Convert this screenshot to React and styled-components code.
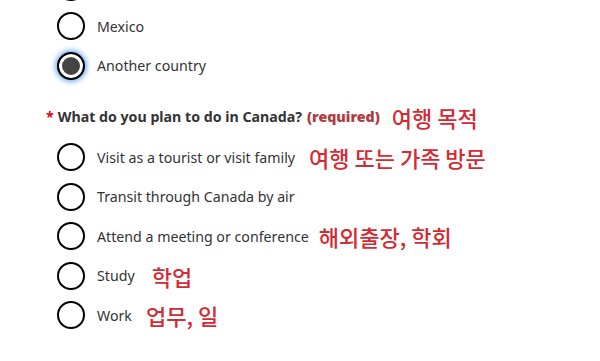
import React, { useState } from "react";
import styled, { createGlobalStyle } from "styled-components";

const GlobalStyle = createGlobalStyle`
  html, body {
    margin: 0;
    padding: 0;
    background: #fff;
    overflow: hidden;
  }
  body {
    font-family: "Noto Sans", "Open Sans", sans-serif;
    color: #333;
  }
`;

const Page = styled.div`
  width: 600px;
  height: 361px;
  overflow: hidden;
  padding-left: 46px;
  box-sizing: border-box;
`;

const Fieldset = styled.fieldset`
  border: 0;
  margin: ${(p) => p.$top || 0}px 0 0;
  padding: 0;
  min-width: 0;
`;

const Legend = styled.legend`
  display: flex;
  align-items: center;
  padding: 0;
  height: 24px;
  margin-bottom: 9px;
  font-size: 14.2px;
  font-weight: 700;
  color: #333;
  white-space: nowrap;
`;

const Star = styled.span`
  color: #d3080c;
  margin-right: 4px;
`;

const Required = styled.strong`
  color: #af3c43;
  margin-left: 5px;
`;

const List = styled.div`
  display: flex;
  flex-direction: column;
  padding-left: 11px;
`;

const Row = styled.label`
  display: flex;
  align-items: center;
  height: 39.5px;
  cursor: pointer;
`;

const Circle = styled.span`
  flex: none;
  width: 28px;
  height: 28px;
  box-sizing: border-box;
  border-radius: 50%;
  border: 2px solid #000;
  background: ${(p) => (p.$checked ? "#444" : "#fff")};
  box-shadow: ${(p) =>
    p.$checked
      ? "inset 0 0 0 3px #fff, 0 0 5px 2px rgba(80, 150, 230, 0.75)"
      : "none"};
`;

const Text = styled.span`
  margin-left: 12px;
  font-size: 14.2px;
  color: #333;
  white-space: nowrap;
`;

const Note = styled.span`
  margin-left: ${(p) => p.$gap}px;
  font-family: "Noto Sans CJK KR", "Noto Sans", sans-serif;
  font-size: 22px;
  font-weight: 500;
  color: #d42a33;
  white-space: nowrap;
  line-height: 1;
`;

// first entry sits above the fold, only the bottom of its circle shows
const countries = [null, "Mexico", "Another country"];

const purposes = [
  { label: "Visit as a tourist or visit family", note: "여행 또는 가족 방문", gap: 14 },
  { label: "Transit through Canada by air" },
  { label: "Attend a meeting or conference", note: "해외출장, 학회", gap: 10 },
  { label: "Study", note: "학업", gap: 17 },
  { label: "Work", note: "업무, 일", gap: 14 },
];

const App = () => {
  const [country, setCountry] = useState("Another country");
  const [purpose, setPurpose] = useState("");

  return (
    <Page>
      <GlobalStyle />
      <Fieldset $top={-33}>
        <List>
          {countries.map((c, i) => (
            <Row key={c || i} onClick={() => c && setCountry(c)}>
              <Circle $checked={c !== null && country === c} />
              {c && <Text>{c}</Text>}
            </Row>
          ))}
        </List>
      </Fieldset>

      <Fieldset $top={19}>
        <Legend>
          <Star>*</Star>
          What do you plan to do in Canada?
          <Required>(required)</Required>
          <Note $gap={12}>여행 목적</Note>
        </Legend>
        <List>
          {purposes.map((p) => (
            <Row key={p.label} onClick={() => setPurpose(p.label)}>
              <Circle $checked={purpose === p.label} />
              <Text>{p.label}</Text>
              {p.note && <Note $gap={p.gap}>{p.note}</Note>}
            </Row>
          ))}
        </List>
      </Fieldset>
    </Page>
  );
};

export default App;
